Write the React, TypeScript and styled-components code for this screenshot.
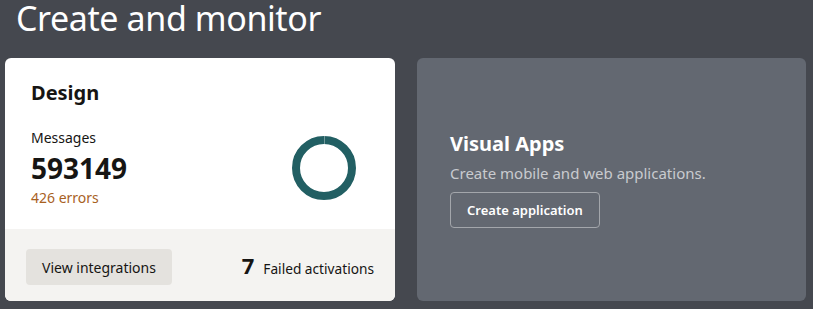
import React from "react";
import styled, { createGlobalStyle } from "styled-components";

const GlobalStyle = createGlobalStyle`
  html, body {
    margin: 0;
    padding: 0;
    background: #45484f;
    font-family: "Noto Sans", "Open Sans", sans-serif;
  }
`;

const Page = styled.div`
  width: 813px;
  height: 309px;
  overflow: hidden;
  background: #45484f;
`;

const Heading = styled.h1`
  margin: 0;
  padding: 0 0 0 16px;
  height: 58px;
  font-size: 34px;
  font-weight: 400;
  line-height: 36px;
  color: #ffffff;
  letter-spacing: -0.4px;
  white-space: nowrap;
`;

const Cards = styled.div`
  display: grid;
  grid-template-columns: 390px 389px;
  column-gap: 22px;
  padding-left: 5px;
`;

const Card = styled.div`
  height: 243px;
  border-radius: 6px;
  overflow: hidden;
  display: flex;
  flex-direction: column;
  background: #ffffff;
`;

const CardBody = styled.div`
  flex: 1;
  padding: 22px 26px 0 26px;
  display: flex;
  flex-direction: column;
`;

const CardTitle = styled.div<{ $light?: boolean }>`
  font-size: 20px;
  font-weight: 700;
  line-height: 26px;
  color: ${(p) => (p.$light ? "#ffffff" : "#161513")};
`;

const Stats = styled.div`
  margin-top: 22px;
  display: flex;
  align-items: center;
  justify-content: space-between;
  padding-right: 10px;
`;

const StatText = styled.div`
  display: flex;
  flex-direction: column;
`;

const Label = styled.div`
  font-size: 14px;
  line-height: 20px;
  color: #161513;
`;

const Big = styled.div`
  font-size: 28px;
  font-weight: 700;
  line-height: 40px;
  color: #161513;
`;

const Errors = styled.div`
  font-size: 14px;
  line-height: 20px;
  color: #a8611f;
`;

const Footer = styled.div`
  height: 72px;
  background: #f4f3f1;
  display: flex;
  align-items: center;
  justify-content: space-between;
  padding: 0 21px 0 21px;
  box-sizing: border-box;
`;

const GrayButton = styled.button`
  height: 36px;
  padding: 0 16px;
  margin-top: 4px;
  border: none;
  border-radius: 4px;
  background: #e4e2de;
  font-family: inherit;
  font-size: 14px;
  color: #161513;
`;

const Failed = styled.div`
  display: flex;
  align-items: baseline;
  gap: 9px;
  font-size: 13.7px;
  color: #161513;
`;

const FailedCount = styled.span`
  font-size: 22px;
  font-weight: 700;
`;

const DarkCard = styled(Card)`
  background: #636871;
  justify-content: center;
  padding-left: 33px;
`;

const Subtitle = styled.div`
  margin-top: 6px;
  font-size: 15px;
  line-height: 20px;
  color: #c9cbcf;
`;

const OutlineButton = styled.button`
  align-self: flex-start;
  margin-top: 9px;
  height: 36px;
  padding: 0 16px;
  border: 1px solid #a3a6ab;
  border-radius: 4px;
  background: transparent;
  font-family: inherit;
  font-size: 13px;
  font-weight: 600;
  color: #ffffff;
`;

const Donut = () => (
  <svg width="70" height="70" viewBox="0 0 70 70">
    <circle cx="35" cy="35" r="28" fill="none" stroke="#225f63" strokeWidth="8" />
    <line x1="35.5" y1="3" x2="35.5" y2="11" stroke="#ffffff" strokeWidth="0.6" opacity="0.6" />
  </svg>
);

export default function App() {
  return (
    <Page>
      <GlobalStyle />
      <Heading>Create and monitor</Heading>
      <Cards>
        <Card>
          <CardBody>
            <CardTitle>Design</CardTitle>
            <Stats>
              <StatText>
                <Label>Messages</Label>
                <Big>593149</Big>
                <Errors>426 errors</Errors>
              </StatText>
              <Donut />
            </Stats>
          </CardBody>
          <Footer>
            <GrayButton>View integrations</GrayButton>
            <Failed>
              <FailedCount>7</FailedCount>
              Failed activations
            </Failed>
          </Footer>
        </Card>
        <DarkCard>
          <CardTitle $light>Visual Apps</CardTitle>
          <Subtitle>Create mobile and web applications.</Subtitle>
          <OutlineButton>Create application</OutlineButton>
        </DarkCard>
      </Cards>
    </Page>
  );
}
